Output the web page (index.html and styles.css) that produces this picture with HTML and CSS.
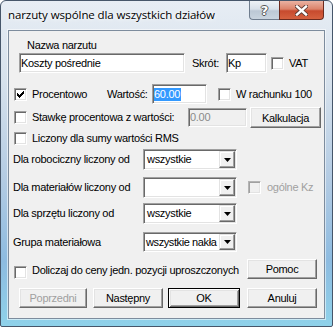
FILE: index.html
```html
<!DOCTYPE html>
<html>
<head>
<meta charset="UTF-8">
<title>narzuty</title>
<link rel="stylesheet" href="styles.css">
</head>
<body>
<div class="window">
  <div class="titlebar">
    <span class="title">narzuty wspólne dla wszystkich działów</span>
    <div class="caption">
      <div class="cap-btn help">?</div>
      <div class="cap-btn close">
        <svg width="13" height="11" viewBox="0 0 13 11"><path d="M2 1.5 L11 9.5 M11 1.5 L2 9.5" stroke="#5b3a33" stroke-width="4.2" stroke-linecap="square"/><path d="M2 1.5 L11 9.5 M11 1.5 L2 9.5" stroke="#fff" stroke-width="2.4" stroke-linecap="square"/></svg>
      </div>
    </div>
  </div>

  <div class="client">
    <div class="row r1"><span class="lbl name-lbl">Nazwa narzutu</span></div>

    <div class="row r2">
      <div class="edit name-edit"><span class="txt">Koszty pośrednie</span></div>
      <span class="lbl short-lbl">Skrót:</span>
      <div class="edit short-edit"><span class="txt">Kp</span></div>
      <span class="cb vat-cb"></span>
      <span class="lbl cb-lbl">VAT</span>
    </div>

    <div class="row r3">
      <span class="cb first-cb"><svg width="7" height="7" viewBox="0 0 7 7"><path d="M0 2h1v1h1v1h1v-1h1v-1h1v-1h1v-1h1v3h-1v1h-1v1h-1v1h-1v1h-1v-1h-1v-1h-1v-1h-1z" fill="#000"/></svg></span>
      <span class="lbl cb-lbl pct-lbl">Procentowo</span>
      <span class="lbl val-lbl">Wartość:</span>
      <div class="edit val-edit"><span class="txt sel">60.00</span></div>
      <span class="cb calc-cb"></span>
      <span class="lbl cb-lbl">W rachunku 100</span>
    </div>

    <div class="row r4">
      <span class="cb first-cb"></span>
      <span class="lbl cb-lbl rate-lbl">Stawkę procentowa z wartości:</span>
      <div class="edit rate-edit disabled"><span class="txt">0.00</span></div>
      <div class="btn calc-btn">Kalkulacja</div>
    </div>

    <div class="row r5">
      <span class="cb first-cb"></span>
      <span class="lbl cb-lbl">Liczony dla sumy wartości RMS</span>
    </div>

    <div class="row r6">
      <span class="lbl combo-lbl">Dla robociczny liczony od</span>
      <div class="combo"><span class="combo-txt">wszystkie</span><span class="combo-btn"><svg width="7" height="4" viewBox="0 0 7 4"><path d="M0 0h7l-3.5 4z" fill="#000"/></svg></span></div>
    </div>

    <div class="row r7">
      <span class="lbl combo-lbl">Dla materiałów liczony od</span>
      <div class="combo"><span class="combo-txt"></span><span class="combo-btn"><svg width="7" height="4" viewBox="0 0 7 4"><path d="M0 0h7l-3.5 4z" fill="#000"/></svg></span></div>
      <span class="cb kz-cb disabled"></span>
      <span class="lbl cb-lbl grey">ogólne Kz</span>
    </div>

    <div class="row r8">
      <span class="lbl combo-lbl">Dla sprzętu liczony od</span>
      <div class="combo"><span class="combo-txt">wszystkie</span><span class="combo-btn"><svg width="7" height="4" viewBox="0 0 7 4"><path d="M0 0h7l-3.5 4z" fill="#000"/></svg></span></div>
    </div>

    <div class="row r9">
      <span class="lbl combo-lbl">Grupa materiałowa</span>
      <div class="combo small"><span class="combo-txt">wszystkie nakła</span><span class="combo-btn"><svg width="7" height="4" viewBox="0 0 7 4"><path d="M0 0h7l-3.5 4z" fill="#000"/></svg></span></div>
    </div>

    <div class="row r10">
      <span class="cb first-cb"></span>
      <span class="lbl cb-lbl add-lbl">Doliczaj do ceny jedn. pozycji uproszczonych</span>
      <div class="btn help-btn">Pomoc</div>
    </div>

    <div class="row r11">
      <div class="btn prev-btn grey">Poprzedni</div>
      <div class="btn next-btn">Następny</div>
      <div class="btn ok-btn default">OK</div>
      <div class="btn cancel-btn">Anuluj</div>
    </div>
  </div>
</div>
</body>
</html>
```

FILE: styles.css
```css
body {
  margin: 0;
  font-family: "Liberation Sans", Arial, sans-serif;
  font-size: 11px;
  letter-spacing: -0.3px;
  color: #000;
}

/* window frame */
.window {
  width: 333px;
  height: 327px;
  box-sizing: border-box;
  border: 1px solid #46566a;
  border-radius: 6px 6px 2px 2px;
  background: linear-gradient(to bottom, #e7edf4 0%, #d6e1ec 25%, #b3cbe3 55%, #8dbbe0 80%, #8fd2ea 100%);
  display: flex;
  flex-direction: column;
}

.titlebar {
  height: 29px;
  display: flex;
  justify-content: space-between;
  align-items: flex-start;
}
.title {
  font-family: "Open Sans", "Noto Sans", sans-serif;
  font-size: 11.5px;
  letter-spacing: -0.1px;
  line-height: 16px;
  margin: 6px 0 0 7px;
  text-shadow: 0 0 6px #fff, 0 0 3px #fff;
}
.caption {
  display: flex;
  margin-right: 8px;
}
.cap-btn {
  height: 19px;
  box-sizing: border-box;
  display: flex;
  align-items: center;
  justify-content: center;
}
.help {
  width: 30px;
  border: 1px solid #6f7d8e;
  border-top: 0;
  border-right: 0;
  border-radius: 0 0 0 4px;
  background: linear-gradient(to bottom, #eef2f6 0%, #d8e0e9 45%, #bcc8d5 55%, #c9d4df 100%);
  color: #fff;
  font-family: "DejaVu Sans", sans-serif;
  font-weight: bold;
  font-size: 13px;
  letter-spacing: 0;
  text-shadow: 1px 0 #555, -1px 0 #555, 0 1px #555, 0 -1px #555;
}
.close {
  width: 45px;
  border: 1px solid #6c2a1e;
  border-top: 0;
  border-radius: 0 0 4px 0;
  background: linear-gradient(to bottom, #eab2a2 0%, #dc836a 45%, #c74a2e 55%, #d5613f 100%);
}

/* client area */
.client {
  margin: 0 7px;
  width: 317px;
  height: 289px;
  box-sizing: border-box;
  border: 1px solid #7d8c9d;
  box-shadow: 0 0 0 1px rgba(255, 255, 255, 0.55);
  background: #f0f0f0;
}

.row {
  display: flex;
  align-items: center;
}
.lbl {
  line-height: 13px;
  white-space: nowrap;
}
.grey {
  color: #a0a0a0;
}

.r1 { margin-top: 8px; height: 13px; }
.r2 { margin-top: 1px; height: 20px; }
.r3 { margin-top: 11px; height: 20px; }
.r4 { margin-top: 3px; height: 21px; }
.r5 { margin-top: 4px; height: 13px; }
.r6 { margin-top: 4px; height: 21px; }
.r7 { margin-top: 7px; height: 21px; }
.r8 { margin-top: 5px; height: 21px; }
.r9 { margin-top: 8px; height: 20px; }
.r10 { margin-top: 7px; height: 21px; align-items: flex-start; }
.r11 { margin-top: 8px; height: 20px; }

.name-lbl { margin-left: 18px; }

/* sunken edit */
.edit {
  box-sizing: border-box;
  height: 20px;
  background: #fff;
  border: 1px solid;
  border-color: #a0a0a0 #fff #fff #a0a0a0;
  box-shadow: inset 1px 1px #696969, inset -1px -1px #e3e3e3;
  padding-left: 1px;
  display: flex;
  align-items: center;
  overflow: hidden;
  white-space: nowrap;
}
.edit .txt {
  line-height: 13px;
}
.edit.disabled {
  background: #f0f0f0;
  color: #8a8a8a;
}
.sel {
  background: #3399ff;
  color: #fff;
  padding-right: 1px;
}
.name-edit { width: 166px; margin-left: 10px; }
.short-lbl { width: 34px; margin-left: 7px; }
.short-edit { width: 41px; }
.val-lbl { width: 45px; }
.val-edit { width: 55px; }
.rate-edit { width: 59px; height: 19px; }

/* checkbox */
.cb {
  width: 13px;
  height: 13px;
  box-sizing: border-box;
  flex: none;
  border: 1px solid;
  border-color: #a0a0a0 #fff #fff #a0a0a0;
  box-shadow: inset 1px 1px #696969, inset -1px -1px #e3e3e3;
  background: #fff;
  padding: 2px 0 0 2px;
}
.cb svg {
  display: block;
}
.cb.disabled {
  background: #f0f0f0;
  border-color: #b4b4b4 #fff #fff #b4b4b4;
  box-shadow: inset 1px 1px #a0a0a0, inset -1px -1px #e3e3e3;
}
.cb-lbl { margin-left: 5px; }
.first-cb { margin-left: 5px; }
.vat-cb { margin-left: 4px; }
.pct-lbl { width: 75px; }
.calc-cb { margin-left: 11px; }
.rate-lbl { width: 156px; }
.kz-cb { margin-left: 11px; }
.kz-cb + .cb-lbl { margin-left: 6px; }

/* raised button */
.btn {
  box-sizing: border-box;
  height: 20px;
  width: 70px;
  border: 1px solid;
  border-color: #fff #696969 #696969 #fff;
  box-shadow: inset -1px -1px #a0a0a0, inset 1px 1px #e3e3e3;
  background: #f0f0f0;
  display: flex;
  align-items: center;
  justify-content: center;
  line-height: 13px;
  padding-top: 1px;
  white-space: nowrap;
}
.btn.default {
  border: 1px solid #000;
  box-shadow: inset 1px 1px #fff, inset -1px -1px #696969, inset 2px 2px #e3e3e3, inset -2px -2px #a0a0a0;
}
.calc-btn { width: 71px; height: 21px; margin-left: 3px; }
.add-lbl { width: 215px; margin-top: 5px; }
.r10 .first-cb { margin-top: 7px; }
.help-btn { margin-left: 0; }
.prev-btn { width: 68px; margin-left: 10px; }
.next-btn { margin-left: 6px; }
.ok-btn { width: 72px; margin-left: 5px; }
.cancel-btn { margin-left: 7px; }

/* combo box */
.combo-lbl { width: 130px; margin-left: 4px; }
.combo {
  box-sizing: border-box;
  width: 94px;
  height: 21px;
  background: #fff;
  border: 1px solid;
  border-color: #a0a0a0 #fff #fff #a0a0a0;
  box-shadow: inset 1px 1px #696969, inset -1px -1px #e3e3e3;
  padding: 1px;
  display: flex;
  align-items: stretch;
}
.combo.small { height: 20px; }
.combo-txt {
  flex: 1;
  min-width: 0;
  white-space: nowrap;
  line-height: 17px;
  padding-left: 2px;
}
.combo.small .combo-txt { line-height: 16px; padding-left: 1px; letter-spacing: -0.4px; }
.combo-btn {
  width: 16px;
  flex: none;
  box-sizing: border-box;
  border: 1px solid;
  border-color: #e3e3e3 #696969 #696969 #e3e3e3;
  box-shadow: inset -1px -1px #a0a0a0, inset 1px 1px #fff;
  background: #f0f0f0;
  display: flex;
  align-items: center;
  justify-content: center;
}
.combo-btn svg { display: block; }
```
